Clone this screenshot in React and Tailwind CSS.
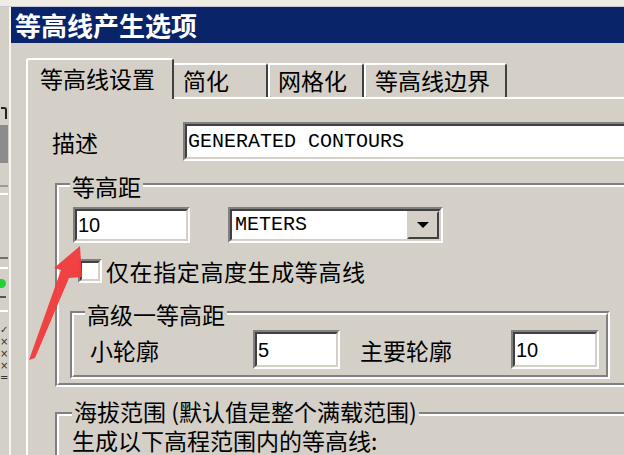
import React from 'react';

const cjk = "font-['Noto_Sans_CJK_SC','Noto_Sans',sans-serif]";
const mono = "font-['Liberation_Mono','DejaVu_Sans_Mono',monospace]";
const sans = "font-['Liberation_Sans',Arial,sans-serif]";

function Sunken({ className = '', children }) {
  return (
    <div className={`border-2 border-t-[#808080] border-l-[#808080] border-r-white border-b-white ${className}`}>
      <div className="h-full border-2 border-t-[#404040] border-l-[#404040] border-r-[#d4d0c8] border-b-[#d4d0c8] bg-white flex items-center">
        {children}
      </div>
    </div>
  );
}

function GroupBox({ label, className = '', labelClass = '', children }) {
  return (
    <div className={`relative border-2 border-t-[#808080] border-l-[#808080] border-r-white border-b-white ${className}`}>
      <div className="h-full border-2 border-t-white border-l-white border-r-[#808080] border-b-[#808080]">
        {children}
      </div>
      <span className={`absolute bg-[#d4d0c8] px-[2px] text-[23px] text-black whitespace-nowrap ${cjk} ${labelClass}`}>
        {label}
      </span>
    </div>
  );
}

function LeftStrip() {
  return (
    <div className="w-[9px] shrink-0 flex flex-col bg-[#d4d0c8]">
      <div className="mt-[100px] ml-[1px] h-[12px] w-[6px] border-t-2 border-r-2 border-[#222] rounded-tr-[3px]" />
      <div className="mt-[6px] h-[38px] w-[8px] bg-[#8c8c8c]" />
      <div className="mt-[22px] h-[2px] w-[8px] bg-[#9a9a9a]" />
      <div className="mt-[6px] h-[2px] w-[8px] bg-white" />
      <div className="mt-[62px] h-[2px] w-[8px] bg-[#707070]" />
      <div className="mt-[8px] h-[2px] w-[8px] bg-white" />
      <div className="mt-[10px] h-[9px] w-[6px] rounded-r-full bg-[#22d03a]" />
      <div className="mt-[8px] h-[2px] w-[6px] bg-[#555]" />
      <div className="mt-[12px] h-[2px] w-[8px] bg-white" />
      <div className="mt-[12px] text-[10px] leading-[12px] text-[#333] font-['DejaVu_Sans',sans-serif]">
        <div>✓</div>
        <div>×</div>
        <div>×</div>
        <div>×</div>
        <div>=</div>
      </div>
    </div>
  );
}

function Tab({ label, active, className = '' }) {
  if (active) {
    return (
      <div className={`relative z-10 mb-[-2px] h-[41px] bg-[#d4d0c8] border-t-2 border-l-2 border-white border-r-2 border-r-[#404040] rounded-tl-[3px] rounded-tr-[3px] pt-[3px] text-[23px] leading-[30px] text-black ${cjk} ${className}`}>
        {label}
      </div>
    );
  }
  return (
    <div className={`h-[34px] border-t-2 border-white border-r-2 border-r-[#404040] rounded-tr-[3px] text-[23px] leading-[30px] text-black ${cjk} ${className}`}>
      {label}
    </div>
  );
}

export default function App() {
  return (
    <div className="relative w-[624px] h-[455px] overflow-hidden bg-[#d4d0c8] flex flex-col">
      <div className="h-[7px] shrink-0 bg-[#efece4] border-b border-[#c9c6d6]" />
      <div className="flex flex-1 min-h-0">
        <LeftStrip />
        <div className="w-[700px] shrink-0 border-l-2 border-l-[#f6f5f1] flex flex-col">
          <div className={`h-[36px] shrink-0 bg-[#0a246a] pl-[4px] flex items-center text-white font-bold text-[26px] leading-none ${cjk}`}>
            等高线产生选项
          </div>
          <div className="pt-[15px] pl-[15px]">
            <div className="flex items-end h-[39px]">
              <Tab active label="等高线设置" className="w-[148px] pl-[12px]" />
              <Tab label="简化" className="w-[94px] pl-[9px]" />
              <Tab label="网格化" className="w-[96px] border-l-2 border-l-white pl-[8px]" />
              <Tab label="等高线边界" className="w-[143px] border-l-2 border-l-white pl-[9px]" />
            </div>
            <div className="h-[400px] border-t-2 border-l-2 border-white">
              <div className="mt-[23px] h-[39px] flex items-center">
                <div className={`pl-[24px] w-[155px] text-[23px] leading-[30px] text-black ${cjk}`}>描述</div>
                <Sunken className="flex-1 h-[39px]">
                  <span className={`pl-[1px] text-[20px] text-black ${mono}`}>GENERATED CONTOURS</span>
                </Sunken>
              </div>

              <GroupBox label="等高距" className="mt-[22px] ml-[27px] h-[204px]" labelClass="left-[13px] top-[-14px] leading-[30px]">
                <div className="mt-[20px] pl-[14px] flex items-center">
                  <Sunken className="w-[117px] h-[36px]">
                    <span className={`pl-[1px] text-[20px] text-black ${sans}`}>10</span>
                  </Sunken>
                  <Sunken className="ml-[38px] w-[215px] h-[36px]">
                    <span className={`flex-1 pl-[3px] text-[20px] text-black ${mono}`}>METERS</span>
                    <div className="w-[32px] h-full border-2 border-t-[#d4d0c8] border-l-[#d4d0c8] border-b-[#404040] border-r-[#404040] bg-[#d4d0c8] flex items-center justify-center">
                      <div className="w-0 h-0 border-l-[6px] border-r-[6px] border-t-[6px] border-l-transparent border-r-transparent border-t-black" />
                    </div>
                  </Sunken>
                </div>

                <div className="mt-[13px] pl-[19px] flex items-center">
                  <Sunken className="w-[24px] h-[24px]" />
                  <span className={`ml-[4px] text-[23px] leading-[30px] tracking-[0.6px] text-black ${cjk}`}>仅在指定高度生成等高线</span>
                </div>

                <GroupBox label="高级一等高距" className="mt-[25px] ml-[11px] w-[540px] h-[68px]" labelClass="left-[13px] top-[-14px] leading-[30px]">
                  <div className="mt-[15px] flex items-center">
                    <div className={`pl-[16px] w-[179px] text-[23px] leading-[30px] text-black ${cjk}`}>小轮廓</div>
                    <Sunken className="w-[87px] h-[39px]">
                      <span className={`pl-[1px] text-[20px] text-black ${sans}`}>5</span>
                    </Sunken>
                    <div className={`ml-[20px] w-[151px] text-[23px] leading-[30px] text-black ${cjk}`}>主要轮廓</div>
                    <Sunken className="w-[88px] h-[39px]">
                      <span className={`pl-[1px] text-[20px] text-black ${sans}`}>10</span>
                    </Sunken>
                  </div>
                </GroupBox>
              </GroupBox>

              <GroupBox label="海拔范围 (默认值是整个满载范围)" className="mt-[25px] ml-[27px] h-[100px]" labelClass="left-[15px] top-[-15px] leading-[24px]">
                <div className={`mt-[12px] pl-[13px] text-[23px] leading-[24px] text-black ${cjk}`}>生成以下高程范围内的等高线:</div>
              </GroupBox>
            </div>
          </div>
        </div>
      </div>

      <svg className="absolute left-0 top-0 pointer-events-none" width="624" height="455" viewBox="0 0 624 455">
        <polygon
          points="80,246 54,268 61,270 29,360 35,358 69,278 82,277"
          fill="#f23a3c"
          opacity="0.95"
        />
      </svg>
    </div>
  );
}
